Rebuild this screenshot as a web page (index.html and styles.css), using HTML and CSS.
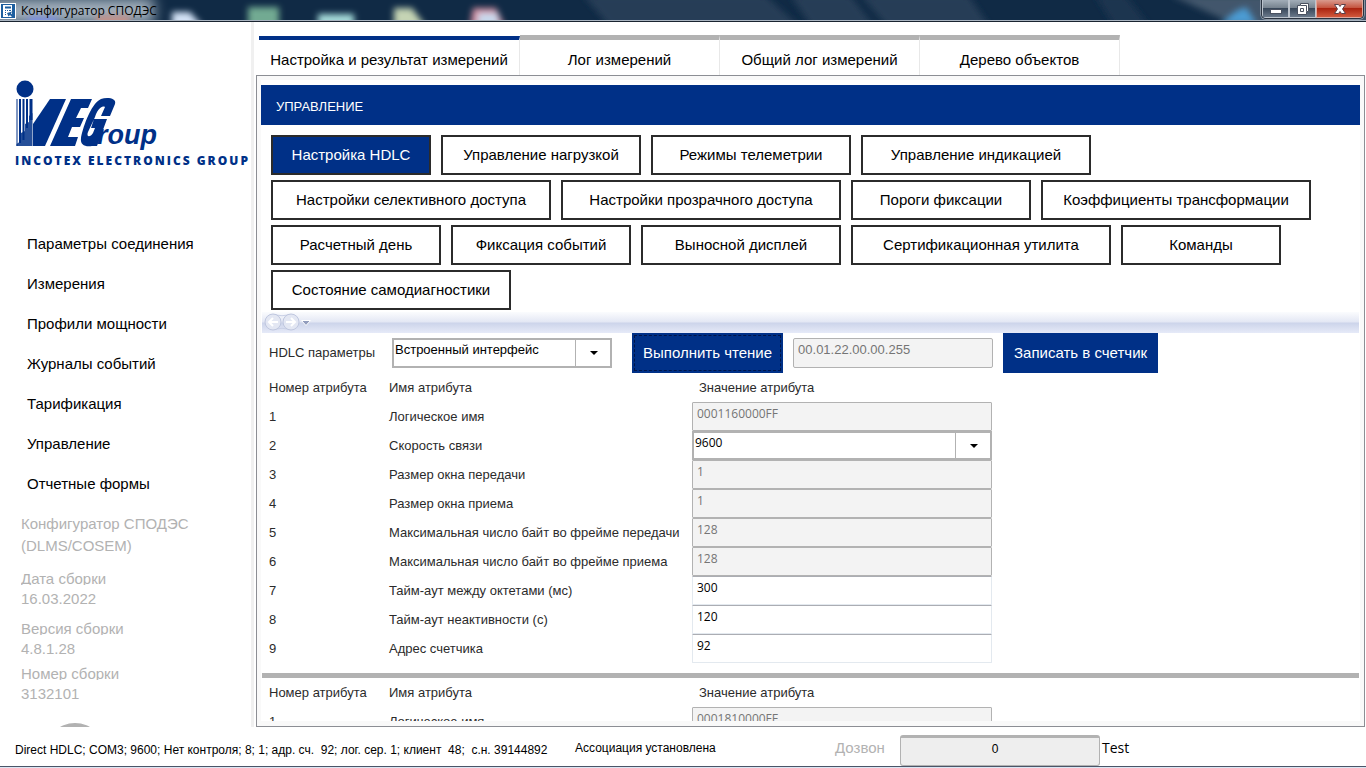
FILE: index.html
```html
<!DOCTYPE html>
<html lang="ru">
<head>
<meta charset="utf-8">
<title>Конфигуратор СПОДЭС</title>
<link rel="stylesheet" href="styles.css">
</head>
<body>
<header class="titlebar">
  <svg class="glass" viewBox="0 0 1366 22" preserveAspectRatio="none" aria-hidden="true">
    <defs>
      <filter id="soft" x="-30%" y="-50%" width="160%" height="200%"><feGaussianBlur stdDeviation="3"/></filter>
      <filter id="haze" x="-30%" y="-100%" width="160%" height="300%"><feGaussianBlur stdDeviation="7"/></filter>
    </defs>
    <rect width="1366" height="22" fill="#102a45"/>
    <g filter="url(#soft)" fill="#263d56">
      <path d="M583 -5H765L800 27H610Z"/><path d="M790 -5H850L875 27H812Z"/><path d="M860 -5H968L990 27H888Z"/><path d="M1095 -5H1125L1150 27H1115Z" fill="#1b3550"/><path d="M1170 -5H1370V27H1240Z" fill="#42566c"/>
    </g>
    <rect x="-10" y="-2" width="164" height="26" fill="#a3b1bd" filter="url(#haze)"/>
    <g filter="url(#soft)">
      <rect x="28" y="17" width="29" height="10" fill="#7f93e8"/><rect x="96" y="15" width="34" height="12" fill="#c2938c"/>
      <path d="M172 12H190L203 27H172Z" fill="#d3e2f6"/><rect x="248" y="7" width="31" height="20" fill="#72aa92"/><rect x="318" y="14" width="36" height="12" fill="#a6dcda"/><path d="M394 8H412L426 27H394Z" fill="#c5d4b4"/><path d="M473 8H496L505 27H470Z" fill="#d58c9d"/><rect x="478" y="13" width="20" height="13" fill="#c8d9ed"/><path d="M1220 24L1236 11L1246 7L1257 24Z" fill="#4c9bd3"/>
    </g>
    <rect y="20" width="1366" height="1" fill="#a9b4c0"/><rect y="21" width="1366" height="1" fill="#1a2430"/>
  </svg>
  <svg class="app-icon" viewBox="0 0 16 16" aria-hidden="true"><rect width="16" height="16" fill="#fff"/><rect x="1" y="1" width="14" height="14" fill="#1d5f9f"/><path d="M3 2H12V14H3Z" fill="#fff"/><path d="M5 3.500H11V5.500H5ZM5 7H6V8H5ZM7 7H8V8H7ZM9 7H11V8H9ZM5 9H6V10H5ZM5 11H6V12H5ZM7 10L12 8.500L11 10.500L14 13L12.500 14.500L10 12L8.500 13.500Z" fill="#1d5f9f"/></svg>
  <h1 class="window-title">Конфигуратор СПОДЭС</h1>
  <div class="window-controls">
    <button class="win-btn" aria-label="Свернуть"><svg viewBox="0 0 14 12"><rect x="1.500" y="6.500" width="11" height="4" fill="#fff" stroke="#4a5261"/></svg></button>
    <button class="win-btn" aria-label="Восстановить"><svg viewBox="0 0 14 12"><path d="M4.500 .5H12.500V8.500H10.500V11.500H1.500V2.500H4.500Z" fill="#fff" stroke="#4a5261"/><path d="M4.500 5.500H7.500V8.500H4.500ZM5 2.500H10.500V8" fill="none" stroke="#4a5261"/></svg></button>
    <button class="win-btn win-close" aria-label="Закрыть"><svg viewBox="0 0 14 12"><path d="M1.500 1.500H5.500L7 3.500L8.500 1.500H12.500L9.500 6L12.500 10.500H8.500L7 8.500L5.500 10.500H1.500L4.500 6Z" fill="#fff" stroke="#5b4148"/></svg></button>
  </div>
</header>
<div class="workspace">
  <aside class="sidebar">
    <div class="logo">
      <svg class="logo-mark" viewBox="0 0 145 72" role="img" aria-label="IEGroup" fill="#003087">
        <circle cx="10" cy="9" r="8.500"/>
        <path d="M1.500 19H2.500V66H1.500ZM4 19H6V63H4ZM7.500 19H9.500V60H7.500ZM11 19H13V48H11ZM14.500 19H17.500V40H14.500Z"/>
        <path d="M1.500 64L6 61V53L10 51V44L14 42V36L17.500 33V66H1.500Z" opacity=".85"/>
        <path d="M35 19H51L30 66H18V44Z"/>
        <path d="M56 19H77L73 28H66L61 38H69L65 47H57L53 57H63L60 66H35Z"/>
        <path d="M86 19C92 17 102 18 100 24L95 36H86L90 27C86 25 82 31 80 37L73 52C71 57 75 58 78 53L80 48H76L79 39H92L82 66H77C70 67 65 65 66 58C67 51 75 24 86 19Z"/>
      </svg>
      <span class="logo-word">roup</span>
      <span class="logo-caption">INCOTEX ELECTRONICS GROUP</span>
    </div>
    <nav class="menu" aria-label="Разделы">
      <a href="#connection">Параметры соединения</a>
      <a href="#measure">Измерения</a>
      <a href="#power">Профили мощности</a>
      <a href="#events">Журналы событий</a>
      <a href="#tariff">Тарификация</a>
      <a href="#control">Управление</a>
      <a href="#reports">Отчетные формы</a>
    </nav>
    <div class="about">
      <p class="product">Конфигуратор СПОДЭС<br>(DLMS/COSEM)</p>
      <dl>
        <div class="fact fact-wide"><dt>Дата сборки</dt><dd>16.03.2022</dd></div>
        <div class="fact"><dt>Версия сборки</dt><dd>4.8.1.28</dd></div>
        <div class="fact"><dt>Номер сборки</dt><dd>3132101</dd></div>
      </dl>
      <div class="round-mark"></div>
    </div>
  </aside>
  <main class="content">
    <div class="tabs" role="tablist">
      <button class="tab tab-main" role="tab" aria-selected="true">Настройка и результат измерений</button>
      <button class="tab" role="tab" aria-selected="false">Лог измерений</button>
      <button class="tab" role="tab" aria-selected="false">Общий лог измерений</button>
      <button class="tab" role="tab" aria-selected="false">Дерево объектов</button>
    </div>
    <section class="panel">
      <div class="panel-inner">
        <h2 class="panel-title">УПРАВЛЕНИЕ</h2>
        <div class="sections">
          <button class="section w160 active">Настройка HDLC</button>
          <button class="section w200">Управление нагрузкой</button>
          <button class="section w200">Режимы телеметрии</button>
          <button class="section w230">Управление индикацией</button>
          <button class="section w280">Настройки селективного доступа</button>
          <button class="section w280">Настройки прозрачного доступа</button>
          <button class="section w180">Пороги фиксации</button>
          <button class="section w270">Коэффициенты трансформации</button>
          <button class="section w170">Расчетный день</button>
          <button class="section w180">Фиксация событий</button>
          <button class="section w200">Выносной дисплей</button>
          <button class="section w260">Сертификационная утилита</button>
          <button class="section w160">Команды</button>
          <button class="section w240">Состояние самодиагностики</button>
        </div>
        <div class="history">
          <svg viewBox="0 0 50 20" aria-hidden="true" fill="none">
            <path d="M11 2.500Q20 5 29 2.500M11 17.500Q20 15 29 17.500" stroke="#c9d0e6"/>
            <circle cx="11" cy="10" r="8" fill="#e3e7f3" stroke="#bfc7df"/><circle cx="29" cy="10" r="8" fill="#e3e7f3" stroke="#bfc7df"/>
            <path d="M16 10H7M11 6L7 10L11 14M24 10H33M29 6L33 10L29 14" stroke="#fff" stroke-width="2"/>
            <path d="M39.500 8.500H48.500L44 13.500Z" fill="#929dbd" stroke="#fff"/>
          </svg>
        </div>
        <div class="command-row">
          <label class="command-label" for="iface">HDLC параметры</label>
          <div class="combo combo-iface"><select id="iface"><option>Встроенный интерфейс</option></select><span class="combo-arrow"></span></div>
          <button class="action focused">Выполнить чтение</button>
          <input class="obis" aria-label="OBIS код" value="00.01.22.00.00.255" disabled>
          <button class="action">Записать в счетчик</button>
        </div>
        <table class="attributes">
          <thead><tr><th class="col-num">Номер атрибута</th><th class="col-name">Имя атрибута</th><th class="col-value">Значение атрибута</th></tr></thead>
          <tbody>
            <tr><td>1</td><td><label for="a1">Логическое имя</label></td><td><input id="a1" class="field" value="0001160000FF" disabled></td></tr>
            <tr><td>2</td><td><label for="a2">Скорость связи</label></td><td><div class="combo combo-speed"><select id="a2"><option>9600</option></select><span class="combo-arrow"></span></div></td></tr>
            <tr><td>3</td><td><label for="a3">Размер окна передачи</label></td><td><input id="a3" class="field" value="1" disabled></td></tr>
            <tr><td>4</td><td><label for="a4">Размер окна приема</label></td><td><input id="a4" class="field" value="1" disabled></td></tr>
            <tr><td>5</td><td><label for="a5">Максимальная число байт во фрейме передачи</label></td><td><input id="a5" class="field" value="128" disabled></td></tr>
            <tr><td>6</td><td><label for="a6">Максимальная число байт во фрейме приема</label></td><td><input id="a6" class="field" value="128" disabled></td></tr>
            <tr><td>7</td><td><label for="a7">Тайм-аут между октетами (мс)</label></td><td><input id="a7" class="field" value="300"></td></tr>
            <tr><td>8</td><td><label for="a8">Тайм-аут неактивности (с)</label></td><td><input id="a8" class="field" value="120"></td></tr>
            <tr><td>9</td><td><label for="a9">Адрес счетчика</label></td><td><input id="a9" class="field" value="92"></td></tr>
          </tbody>
        </table>
        <hr class="divider">
        <table class="attributes">
          <thead><tr><th class="col-num">Номер атрибута</th><th class="col-name">Имя атрибута</th><th class="col-value">Значение атрибута</th></tr></thead>
          <tbody>
            <tr><td>1</td><td><label for="b1">Логическое имя</label></td><td><input id="b1" class="field" value="0001810000FF" disabled></td></tr>
          </tbody>
        </table>
      </div>
    </section>
  </main>
</div>
<footer class="statusbar">
  <span class="connection">Direct HDLC; COM3; 9600; Нет контроля; 8; 1; адр. сч.&nbsp; 92; лог. сер. 1; клиент&nbsp; 48;&nbsp; с.н. 39144892</span>
  <span class="association">Ассоциация установлена</span>
  <span class="dial">Дозвон</span>
  <div class="progress"><span>0</span></div>
  <span class="test">Test</span>
</footer>
<div class="taskbar-edge"></div>
</body>
</html>
```
FILE: styles.css
```css
* { box-sizing: border-box; }
body {
  margin: 0;
  height: 100vh;
  display: flex;
  flex-direction: column;
  overflow: hidden;
  background: #fff;
  color: #000;
  font: 15px/20px "Liberation Sans", Arial, sans-serif;
}
button, input, select { font: inherit; color: inherit; margin: 0; border-radius: 0; }

.titlebar { position: relative; flex: none; height: 22px; display: flex; align-items: flex-start; }
.glass { position: absolute; inset: 0; width: 100%; height: 100%; z-index: -1; }
.app-icon { width: 16px; height: 16px; margin-top: 3px; }
.window-title { margin: 0 0 0 5px; font: 12px/22px "Open Sans", "Noto Sans", sans-serif; flex: 1; }
.window-controls {
  display: flex;
  height: 19px;
  margin-right: 2px;
  border: 1px solid #2a3340;
  border-top: 0;
  border-radius: 0 0 5px 5px;
  box-shadow: 0 0 0 1px #8995a2;
  overflow: hidden;
}
.win-btn {
  width: 27px;
  padding: 0;
  border: 1px solid #bcc4cd;
  border-top: 0;
  background: linear-gradient(#a2adb8 0, #77838f 45%, #39485a 50%, #69788a 100%);
  display: grid;
  place-items: center;
}
.win-btn svg { width: 14px; height: 12px; }
.win-close { width: 47px; border-color: #e0a79c; background: linear-gradient(#d99a8d 0, #c55540 45%, #ab2410 50%, #d0583b 100%); }

.workspace { flex: 1; min-height: 0; display: flex; }
.sidebar { width: 254px; flex: none; border-right: 3px solid #f0f0f0; overflow: hidden; }
.logo { position: relative; height: 202px; padding: 58px 0 0 15px; color: #003087; }
.logo-mark { display: block; width: 145px; height: 72px; }
.logo-word { position: absolute; left: 97px; top: 97px; font: italic bold 27px/32px "Liberation Sans", sans-serif; }
.logo-caption { display: block; font: 800 12px/18px "Open Sans", sans-serif; letter-spacing: 2px; white-space: nowrap; }
.menu { display: flex; flex-direction: column; }
.menu a { padding: 10px 27px; color: #000; text-decoration: none; }
.about { color: #b2b2b2; padding: 9px 21px 0; }
.about p, .about dl, .about dd { margin: 0; }
.product { line-height: 22px; }
.fact { padding-top: 5px; }
.fact-wide { padding: 12px 0 5px; }
.fact dt { height: 16px; margin-bottom: 4px; overflow: hidden; }
.round-mark { width: 60px; height: 60px; margin: 19px 0 0 24px; border-radius: 50%; background: #b2b2b2; }

.content { flex: 1; min-width: 0; display: flex; flex-direction: column; padding: 13px 1px 0 2px; }
.tabs { display: flex; padding-left: 3px; height: 40px; }
.tab { width: 200px; padding: 5px 0 0; border: 0; border-top: 5px solid #b2b2b2; border-right: 1px solid #e8e8e8; background: #fff; white-space: nowrap; }
.tab-main { width: 261px; margin-top: 1px; border-top: 4px solid #003087; }
.panel { flex: 1; min-height: 0; border: 1px solid #8c8e94; background: #f9f9f9; padding: 4px 4px 5px; }
.panel-inner { height: 100%; overflow: hidden; background: #fff; padding-top: 5px; }
.panel-title { margin: 0; padding: 4px 15px 0; background: #003087; color: #fff; font-size: 13px; line-height: 36px; font-weight: normal; }
.sections { display: flex; flex-wrap: wrap; gap: 5px 10px; padding: 10px 10px 2px; }
.section { height: 40px; padding: 0; border: 2px solid #2b2b2b; background: #fff; white-space: nowrap; }
.section.active { background: #003087; color: #fff; }
.w160 { width: 160px; } .w170 { width: 170px; } .w180 { width: 180px; } .w200 { width: 200px; }
.w230 { width: 230px; } .w240 { width: 240px; } .w260 { width: 260px; } .w270 { width: 270px; } .w280 { width: 280px; }
.history { height: 21px; margin: 0 1px; background: linear-gradient(#fbfcfe 0, #e3e7f4 48%, #ccd4ea 52%, #e6eaf8 100%); }
.history svg { display: block; width: 50px; height: 20px; }
.command-row { display: flex; align-items: center; height: 40px; padding-left: 8px; }
.command-label { width: 123px; font-size: 13px; color: #2b2b2b; }
.combo { position: relative; width: 220px; height: 30px; font-size: 13px; }
.combo select { display: block; width: 100%; height: 100%; padding: 0 40px 8px 1px; border: 2px solid #b2b2b2; background: #fff; appearance: none; }
.combo-arrow { position: absolute; top: 2px; right: 2px; bottom: 2px; width: 35px; padding-left: 2px; border-left: 1px solid #b2b2b2; display: grid; place-items: center; pointer-events: none; }
.combo-arrow::after { content: ""; border: 4px solid transparent; border-top-color: #000; border-bottom: 0; }
.combo-iface { margin-right: 20px; }
.action { height: 40px; padding: 0 11px; border: 0; background: #003087; color: #fff; white-space: nowrap; }
.focused { outline: 1px dashed #001548; outline-offset: -3px; }
.obis { width: 200px; height: 30px; margin: 0 10px; padding: 0 4px 8px; border: 1px solid #b2b2b2; border-radius: 2px; background: #f3f3f3; color: #757575; font-size: 13px; }
.attributes { border-collapse: collapse; margin-left: 8px; font-size: 13px; line-height: 20px; color: #2b2b2b; table-layout: fixed; width: 724px; }
.attributes th { height: 29px; padding: 0; font-weight: normal; text-align: left; }
.attributes td { height: 29px; padding: 0; white-space: nowrap; }
.col-num { width: 120px; }
.col-name { width: 303px; }
.attributes .col-value { padding-left: 7px; }
.field { display: block; width: 300px; height: 29px; padding: 0 4px 7px; border: 1px solid #e3e9ef; border-top-color: #abadb3; border-radius: 1px; background: #fff; color: #000; font: 12px/20px "Open Sans", "Noto Sans", sans-serif; }
.field:disabled { border-color: #b2b2b2; background: #f3f3f3; color: #757575; }
.combo-speed { width: 300px; height: 29px; color: #000; font: 12px/20px "Open Sans", "Noto Sans", sans-serif; }
.divider { height: 5px; margin: 10px 1px 0; border: 0; background: #b2b2b2; }

.statusbar { flex: none; height: 39px; display: flex; align-items: center; padding: 3px 15px 0; font-size: 12px; white-space: nowrap; }
.connection { width: 560px; padding-top: 4px; }
.association { width: 260px; }
.dial { width: 65px; color: #b2b2b2; font-size: 15px; }
.progress { width: 200px; height: 31px; display: grid; place-items: center; padding: 0 10px 4px 0; border: 1px solid #b2b2b2; border-top: 3px solid #b2b2b2; border-radius: 3px; background: #eee; margin-top: 4px; }
.test { margin-left: 2px; font: 14px/20px "Open Sans", sans-serif; }
.taskbar-edge { flex: none; height: 2px; border-top: 1px solid #4a5568; background: #dbe6f3; }
```
